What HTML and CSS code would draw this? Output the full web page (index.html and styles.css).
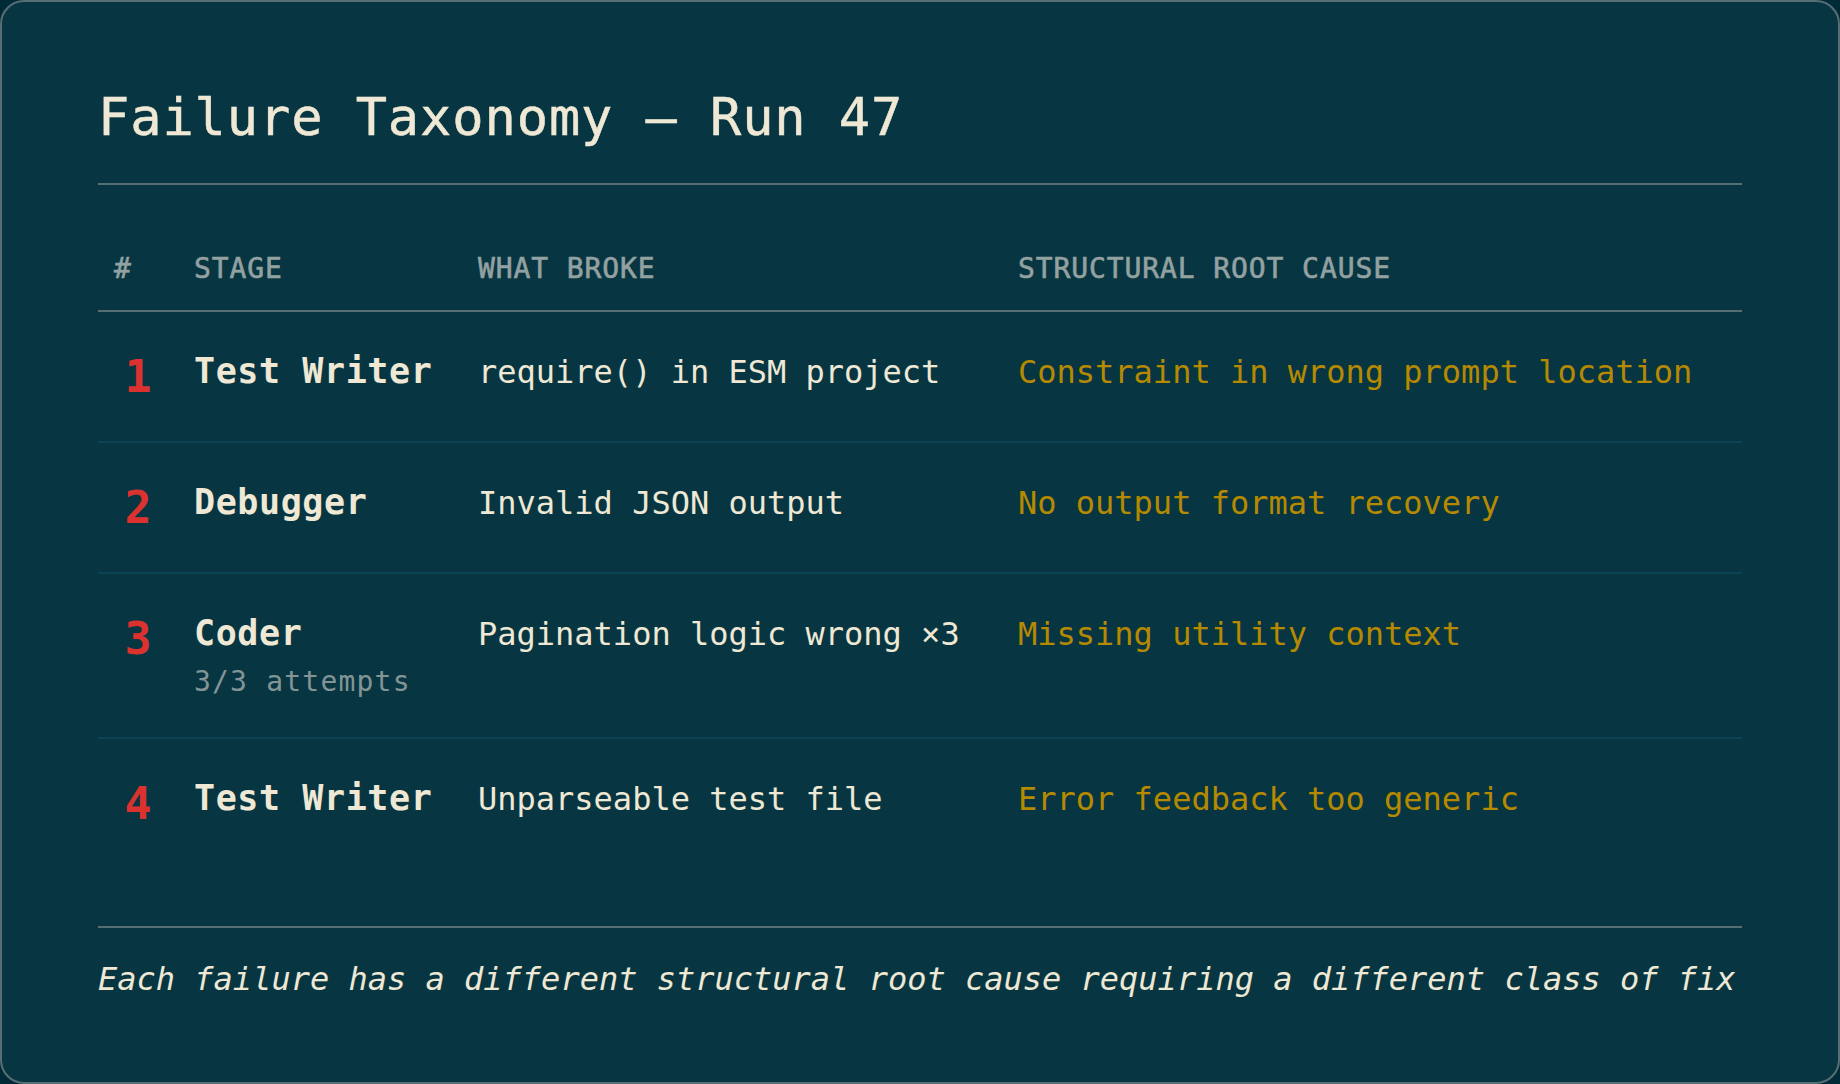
FILE: index.html
```html
<!DOCTYPE html>
<html lang="en">
<head>
<meta charset="utf-8">
<title>Failure Taxonomy — Run 47</title>
<link rel="stylesheet" href="styles.css">
</head>
<body>
<main class="card">
  <h1 class="title">Failure Taxonomy — Run 47</h1>
  <hr class="rule">
  <table class="taxonomy">
    <colgroup>
      <col class="col-num">
      <col class="col-stage">
      <col class="col-broke">
      <col class="col-cause">
    </colgroup>
    <thead>
      <tr>
        <th>#</th>
        <th>Stage</th>
        <th>What Broke</th>
        <th>Structural Root Cause</th>
      </tr>
    </thead>
    <tbody>
      <tr>
        <td class="num">1</td>
        <td class="stage"><div class="stage-name">Test Writer</div></td>
        <td class="broke">require() in ESM project</td>
        <td class="cause">Constraint in wrong prompt location</td>
      </tr>
      <tr>
        <td class="num">2</td>
        <td class="stage"><div class="stage-name">Debugger</div></td>
        <td class="broke">Invalid JSON output</td>
        <td class="cause">No output format recovery</td>
      </tr>
      <tr>
        <td class="num">3</td>
        <td class="stage"><div class="stage-name">Coder</div><div class="stage-sub">3/3 attempts</div></td>
        <td class="broke">Pagination logic wrong ×3</td>
        <td class="cause">Missing utility context</td>
      </tr>
      <tr>
        <td class="num">4</td>
        <td class="stage"><div class="stage-name">Test Writer</div></td>
        <td class="broke">Unparseable test file</td>
        <td class="cause">Error feedback too generic</td>
      </tr>
    </tbody>
  </table>
  <hr class="rule rule-bottom">
  <p class="footnote">Each failure has a different structural root cause requiring a different class of fix</p>
</main>
</body>
</html>
```

FILE: styles.css
```css
* {
  box-sizing: border-box;
}

html, body {
  margin: 0;
  padding: 0;
  background: #002b36;
}

body {
  width: 1840px;
  height: 1084px;
  font-family: "DejaVu Sans Mono", "Liberation Mono", monospace;
  color: #eee8d5;
}

.card {
  width: 1840px;
  height: 1084px;
  background: #073642;
  border: 2px solid #586e75;
  border-radius: 24px;
  padding: 84px 96px 0;
  display: flex;
  flex-direction: column;
}

.title {
  margin: 0;
  font-size: 52px;
  line-height: 62px;
  font-weight: normal;
  letter-spacing: 0.9px;
  color: #eee8d5;
  -webkit-text-stroke: 0.5px #eee8d5;
}

.rule {
  border: 0;
  height: 2px;
  background: #586e75;
  margin: 35px 0 0;
  width: 100%;
}

.taxonomy {
  width: 100%;
  border-collapse: collapse;
  table-layout: fixed;
  margin-top: 66px;
}

.col-num { width: 80px; }
.col-stage { width: 284px; }
.col-broke { width: 540px; }

.taxonomy th {
  text-align: left;
  font-size: 28px;
  line-height: 33px;
  font-weight: normal;
  letter-spacing: 0.9px;
  text-transform: uppercase;
  color: #93a1a1;
  -webkit-text-stroke: 0.6px #93a1a1;
  padding: 1px 16px 25px;
  border-bottom: 2px solid #586e75;
}

.taxonomy td {
  vertical-align: top;
  padding: 40px 16px 40px;
  font-size: 32px;
  line-height: 40px;
  border-bottom: 2px solid #0a4353;
  white-space: nowrap;
}

.taxonomy tbody tr:last-child td {
  border-bottom: 0;
}

.taxonomy td.num {
  text-align: center;
  font-size: 45px;
  line-height: 49px;
  color: #dc322f;
  font-weight: bold;
}

.stage-name {
  font-size: 35px;
  line-height: 38px;
  font-weight: bold;
  letter-spacing: 0.6px;
  color: #eee8d5;
}

.stage-sub {
  margin-top: 15px;
  font-size: 28px;
  line-height: 30px;
  letter-spacing: 1.2px;
  color: #839496;
}

.broke {
  color: #eee8d5;
}

.cause {
  color: #b58900;
}

.rule-bottom {
  margin-top: 58px;
}

.footnote {
  margin: 33px 0 0;
  font-size: 32px;
  line-height: 37px;
  font-style: italic;
  color: #eee8d5;
}
```
